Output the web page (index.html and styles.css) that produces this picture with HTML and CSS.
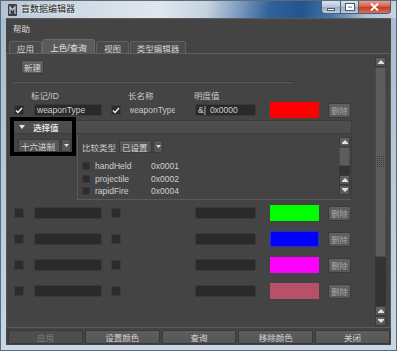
FILE: index.html
```html
<!DOCTYPE html>
<html>
<head>
<meta charset="utf-8">
<title>盲数据编辑器</title>
<link rel="stylesheet" href="styles.css">
</head>
<body>
<div class="window">
  <div class="titlebar">
    <div class="appicon">
      <svg width="9" height="12" viewBox="0 0 9 12"><rect x="0" y="0" width="9" height="12" rx="1" fill="#3a3f46"/><path d="M2 10V3l2.5 3L7 3v7" stroke="#c9d0d8" stroke-width="1.2" fill="none"/></svg>
    </div>
    <div class="title">盲数据编辑器</div>
    <div class="caption">
      <div class="cap cap-min"><span class="glyph-min"></span></div>
      <div class="cap cap-max"><span class="glyph-max"></span></div>
      <div class="cap cap-close">
        <svg width="9" height="8" viewBox="0 0 9 8"><path d="M1 0.5L8 7.5M8 0.5L1 7.5" stroke="#ffffff" stroke-width="1.8"/></svg>
      </div>
    </div>
  </div>
  <div class="frame">
    <div class="client">
      <div class="menubar"><span class="menu">帮助</span></div>
      <div class="tabs">
        <div class="tab t1">应用</div>
        <div class="tab t2 active">上色/查询</div>
        <div class="tab t3">视图</div>
        <div class="tab t4">类型编辑器</div>
      </div>
      <div class="panel">
        <div class="scrollarea">
          <div class="content">
            <div class="btn newbtn">新建</div>
            <div class="sep"></div>
            <div class="labels">
              <span class="lab l1">标记/ID</span>
              <span class="lab l2">长名称</span>
              <span class="lab l3">明度值</span>
            </div>

            <div class="row">
              <span class="cb c1"><svg width="8" height="7" viewBox="0 0 8 7"><path d="M1 3.5L3 5.5L7 1" stroke="#f0f0f0" stroke-width="1.4" fill="none"/></svg></span>
              <span class="field f1">weaponType</span>
              <span class="cb c2"><svg width="8" height="7" viewBox="0 0 8 7"><path d="M1 3.5L3 5.5L7 1" stroke="#f0f0f0" stroke-width="1.4" fill="none"/></svg></span>
              <span class="f2"><span class="f2in">weaponType</span></span>
              <span class="field f3"><span class="amp">&amp;|</span>0x0000</span>
              <span class="swatch red"></span>
              <span class="btn del">删除</span>
            </div>

            <div class="selframe">
              <div class="selhead">
                <svg class="tri" width="6" height="4" viewBox="0 0 6 4"><path d="M0 0H6L3 4Z" fill="#e8e8e8"/></svg>
                <span class="seltitle">选择值</span>
              </div>
              <div class="selbody">
                <div class="leftcol">
                  <div class="combo">
                    <span class="combobox hexbox">十六进制</span>
                    <span class="comboarrow"><svg width="5" height="3" viewBox="0 0 5 3"><path d="M0 0H5L2.5 3Z" fill="#e0e0e0"/></svg></span>
                  </div>
                </div>
                <div class="nested">
                  <div class="nestcontent">
                    <div class="cmprow">
                      <span class="cmplabel">比较类型</span>
                      <div class="combo">
                        <span class="combobox setbox">已设置</span>
                        <span class="comboarrow"><svg width="5" height="3" viewBox="0 0 5 3"><path d="M0 0H5L2.5 3Z" fill="#e0e0e0"/></svg></span>
                      </div>
                    </div>
                    <div class="list">
                      <div class="item"><span class="lcb"></span><span class="iname">handHeld</span><span class="ival">0x0001</span></div>
                      <div class="item"><span class="lcb"></span><span class="iname">projectile</span><span class="ival">0x0002</span></div>
                      <div class="item"><span class="lcb"></span><span class="iname">rapidFire</span><span class="ival">0x0004</span></div>
                    </div>
                  </div>
                  <div class="vscroll small">
                    <div class="sbtn"><svg width="6" height="4" viewBox="0 0 6 4"><path d="M3 0L6 3H0Z" fill="#e0e0e0"/><rect y="3" width="6" height="1" fill="#e0e0e0"/></svg></div>
                    <div class="thumb sthumb"></div>
                    <div class="track strack"></div>
                    <div class="sbtn"><svg width="6" height="4" viewBox="0 0 6 4"><path d="M3 0L6 3H0Z" fill="#e0e0e0"/><rect y="3" width="6" height="1" fill="#e0e0e0"/></svg></div>
                    <div class="sbtn"><svg width="6" height="4" viewBox="0 0 6 4"><rect width="6" height="1" fill="#e0e0e0"/><path d="M0 1H6L3 4Z" fill="#e0e0e0"/></svg></div>
                  </div>
                </div>
              </div>
              <div class="annot"></div>
            </div>

            <div class="rows">
              <div class="row">
                <span class="cb c1"></span>
                <span class="field f1"></span>
                <span class="cb c2"></span>
                <span class="f2"></span>
                <span class="field f3"></span>
                <span class="swatch green"></span>
                <span class="btn del">删除</span>
              </div>
              <div class="row">
                <span class="cb c1"></span>
                <span class="field f1"></span>
                <span class="cb c2"></span>
                <span class="f2"></span>
                <span class="field f3"></span>
                <span class="swatch blue"></span>
                <span class="btn del">删除</span>
              </div>
              <div class="row">
                <span class="cb c1"></span>
                <span class="field f1"></span>
                <span class="cb c2"></span>
                <span class="f2"></span>
                <span class="field f3"></span>
                <span class="swatch magenta"></span>
                <span class="btn del">删除</span>
              </div>
              <div class="row">
                <span class="cb c1"></span>
                <span class="field f1"></span>
                <span class="cb c2"></span>
                <span class="f2"></span>
                <span class="field f3"></span>
                <span class="swatch rose"></span>
                <span class="btn del">删除</span>
              </div>
            </div>
          </div>
          <div class="vscroll main">
            <div class="sbtn"><svg width="6" height="4" viewBox="0 0 6 4"><path d="M3 0L6 3H0Z" fill="#e0e0e0"/><rect y="3" width="6" height="1" fill="#e0e0e0"/></svg></div>
            <div class="thumb mthumb">
              <svg width="7" height="12" viewBox="0 0 7 12"><defs><pattern id="grip" width="2" height="2" patternUnits="userSpaceOnUse"><rect width="1" height="1" fill="#3a3a3a"/></pattern></defs><rect width="7" height="12" fill="url(#grip)"/></svg>
            </div>
            <div class="track mtrack"></div>
            <div class="sbtn"><svg width="6" height="4" viewBox="0 0 6 4"><path d="M3 0L6 3H0Z" fill="#e0e0e0"/><rect y="3" width="6" height="1" fill="#e0e0e0"/></svg></div>
            <div class="sbtn"><svg width="6" height="4" viewBox="0 0 6 4"><rect width="6" height="1" fill="#e0e0e0"/><path d="M0 1H6L3 4Z" fill="#e0e0e0"/></svg></div>
          </div>
        </div>
        <div class="bottombar">
          <div class="bbtn disabled">应用</div>
          <div class="bbtn">设置颜色</div>
          <div class="bbtn">查询</div>
          <div class="bbtn">移除颜色</div>
          <div class="bbtn">关闭</div>
        </div>
      </div>
    </div>
  </div>
</div>
</body>
</html>
```

FILE: styles.css
```css
* { box-sizing: border-box; margin: 0; padding: 0; }
html, body { width: 397px; height: 351px; overflow: hidden; }
body {
  font-family: "Liberation Sans", "Noto Sans CJK SC", sans-serif;
  font-size: 8.5px;
  color: #cfcfcf;
  background: #b9c9da;
}
.window {
  width: 397px;
  height: 351px;
  display: flex;
  flex-direction: column;
  background: linear-gradient(to bottom, #a8bbcf 0%, #bccbdb 60%, #c9d6e3 100%);
  border: 1px solid #5a6b7c;
}
/* title bar */
.titlebar {
  height: 17px;
  display: flex;
  align-items: flex-start;
  background: linear-gradient(100deg, #b3c2d2 0%, #d3dce6 22%, #dfe6ee 40%, #c6d3e0 52%, #7d9cbf 60%, #31609a 68%, #24558e 76%, #4a77a8 84%, #a9bfd6 92%, #c6d4e2 100%);
}
.appicon { margin: 3px 0 0 7px; width: 9px; height: 12px; display: flex; }
.title {
  margin: 2px 0 0 4px;
  font-size: 9px;
  line-height: 13px;
  color: #1c1c1c;
  text-shadow: 0 0 4px #eef3f8, 0 0 2px #eef3f8;
}
.caption { margin-left: auto; margin-right: 5px; display: flex; height: 13px; }
.cap {
  height: 13px;
  display: flex;
  align-items: center;
  justify-content: center;
  border: 1px solid #4d5d70;
  border-top: none;
}
.cap-min {
  width: 19px;
  border-radius: 0 0 0 4px;
  background: linear-gradient(to bottom, #d9e3ee, #b3c4d6 50%, #98adc3 51%, #b9cade);
  border-right: none;
}
.cap-max {
  width: 19px;
  background: linear-gradient(to bottom, #d9e3ee, #b3c4d6 50%, #98adc3 51%, #b9cade);
}
.cap-close {
  width: 32px;
  border-left: none;
  border-radius: 0 0 4px 0;
  background: linear-gradient(to bottom, #e8a08f, #d35a45 50%, #c03a22 51%, #d8705a);
}
.glyph-min { width: 8px; height: 3px; background: #fff; border: 1px solid #4a5a6a; margin-top: 4px; }
.glyph-max { width: 8px; height: 6px; border: 2px solid #fff; outline: 1px solid #4a5a6a; }

/* frame + client */
.frame { flex: 1; display: flex; padding: 0 5px 5px 5px; }
.client {
  flex: 1;
  display: flex;
  flex-direction: column;
  background: #444444;
  border-top: 1px solid #5b5b5b;
}
.menubar { height: 17px; display: flex; align-items: center; padding-left: 7px; }
.menu { color: #dcdcdc; }
.tabs { height: 17px; display: flex; align-items: flex-end; padding-left: 3px; }
.tab {
  height: 12px;
  display: flex;
  align-items: center;
  justify-content: center;
  background: #4b4b4b;
  border: 1px solid #606060;
  border-bottom: none;
  border-radius: 3px 3px 0 0;
  color: #d4d4d4;
}
.tab.active { height: 14px; background: #5b5b5b; border-color: #6a6a6a; color: #e6e6e6; }
.t1 { width: 33px; }
.t2 { width: 53px; }
.t3 { width: 33px; margin-left: 1px; }
.t4 { width: 56px; margin-left: 1px; }

.panel {
  flex: 1;
  display: flex;
  flex-direction: column;
  border-top: 1px solid #606060;
}
.scrollarea {
  height: 274px;
  display: flex;
  border-left: 1px solid #575757;
  border-right: 1px solid #575757;
  border-bottom: 1px solid #5c5c5c;
}
.content { width: 368px; display: flex; flex-direction: column; }

.btn {
  display: flex;
  align-items: center;
  justify-content: center;
  background: linear-gradient(to bottom, #616161, #575757);
  border: 1px solid #3b3b3b;
  border-radius: 2px;
  color: #d6d6d6;
}
.newbtn { margin: 6px 0 0 14px; width: 23px; height: 14px; }
.sep {
  margin: 7px 0 0 5px;
  width: 281px;
  height: 2px;
  border-top: 1px solid #3a3a3a;
  border-bottom: 1px solid #5a5a5a;
}
.labels { margin-top: 5px; height: 14px; display: flex; align-items: center; }
.lab { color: #cacaca; }
.l1 { margin-left: 24px; width: 97px; }
.l2 { width: 66px; }

.row { height: 16px; display: flex; align-items: center; }
.cb {
  width: 10px;
  height: 10px;
  background: #2c2c2c;
  border: 1px solid #3a3a3a;
  border-radius: 1px;
  display: flex;
  align-items: center;
  justify-content: center;
}
.c1 { margin-left: 7px; }
.c2 { margin-left: 9px; }
.field {
  height: 12px;
  background: #2a2a2a;
  border: 1px solid #393939;
  border-radius: 2px;
  display: flex;
  align-items: center;
  padding-left: 2px;
  color: #d0d0d0;
  white-space: nowrap;
  overflow: hidden;
}
.f1 { margin-left: 10px; width: 68px; }
.f2 { margin-left: 9px; width: 45px; height: 12px; overflow: hidden; display: flex; align-items: center; white-space: nowrap; color: #c8c8c8; }
.f2in { margin-left: -2px; }
.f3 { margin-left: 20px; width: 61px; }
.amp { margin-right: 4px; }
.swatch { margin-left: 14px; width: 49px; height: 16px; }
.red { background: #ff0000; }
.green { background: #00ff00; }
.blue { background: #0000ff; border: 1px solid #2a2ad0; }
.magenta { background: #ff00ff; }
.rose { background: #b85069; }
.del { margin-left: 9px; width: 23px; height: 15px; color: #a8a8a8; }

/* selection frame */
.selframe { margin: 2px 0 0 5px; width: 340px; position: relative; }
.selhead {
  height: 14px;
  display: flex;
  align-items: center;
  background: #4d4d4d;
  border: 1px solid #3b3b3b;
  border-radius: 2px;
}
.tri { margin-left: 6px; }
.seltitle { margin-left: 8px; font-weight: bold; color: #dedede; }
.selbody { height: 66px; display: flex; }
.leftcol { width: 65px; padding: 5px 0 0 6px; }
.combo { display: flex; height: 13px; }
.combobox {
  height: 13px;
  display: flex;
  align-items: center;
  padding-left: 2px;
  background: #565656;
  border: 1px solid #3a3a3a;
  border-radius: 2px;
  color: #d8d8d8;
}
.hexbox { width: 42px; }
.setbox { width: 33px; }
.comboarrow {
  margin-left: 1px;
  width: 10px;
  height: 13px;
  display: flex;
  align-items: center;
  justify-content: center;
  background: #565656;
  border: 1px solid #3a3a3a;
  border-radius: 2px;
}
.nested {
  margin-top: 1px;
  width: 275px;
  height: 65px;
  display: flex;
  border-left: 1px solid #5a5a5a;
  border-bottom: 1px solid #5a5a5a;
  border-right: 1px solid #3a3a3a;
}
.nestcontent { width: 261px; display: flex; flex-direction: column; }
.cmprow { margin-top: 5px; padding-left: 4px; display: flex; align-items: center; height: 13px; }
.cmplabel { width: 37px; color: #cacaca; }
.list { margin-top: 7px; display: flex; flex-direction: column; }
.item { height: 12.5px; display: flex; align-items: center; padding-left: 4px; }
.lcb { width: 8px; height: 8px; background: #2c2c2c; border: 1px solid #383838; }
.iname { margin-left: 5px; width: 56px; color: #d0d0d0; }
.ival { color: #d0d0d0; }

.annot {
  position: absolute;
  left: -2px;
  top: -3px;
  width: 66px;
  height: 39px;
  border: 4px solid #000;
}

.rows { margin-top: 5px; display: flex; flex-direction: column; gap: 10px; }

/* scrollbars */
.vscroll { display: flex; flex-direction: column; }
.vscroll.main { width: 11px; margin-left: 0; padding: 3px 0 1px; }
.vscroll.small { width: 11px; padding-top: 2px; }
.sbtn {
  height: 10px;
  display: flex;
  align-items: center;
  justify-content: center;
  background: linear-gradient(to bottom, #636363, #575757);
  border: 1px solid #3a3a3a;
  border-radius: 1px;
}
.thumb {
  background: #5d5d5d;
  border: 1px solid #4a4a4a;
  display: flex;
  align-items: center;
  justify-content: center;
}
.track { background: #343434; }
.mthumb { height: 190px; }
.mtrack { height: 49px; }
.sthumb { height: 19px; }
.strack { height: 9px; }

/* bottom bar */
.bottombar { flex: 1; display: flex; gap: 2px; padding: 2px 1px 1px 2px; }
.bbtn {
  flex: 1;
  height: 14px;
  display: flex;
  align-items: center;
  justify-content: center;
  background: linear-gradient(to bottom, #5e5e5e, #555555);
  border: 1px solid #393939;
  border-radius: 2px;
  color: #d4d4d4;
}
.bbtn.disabled { background: #4d4d4d; color: #7e7e7e; }
```
